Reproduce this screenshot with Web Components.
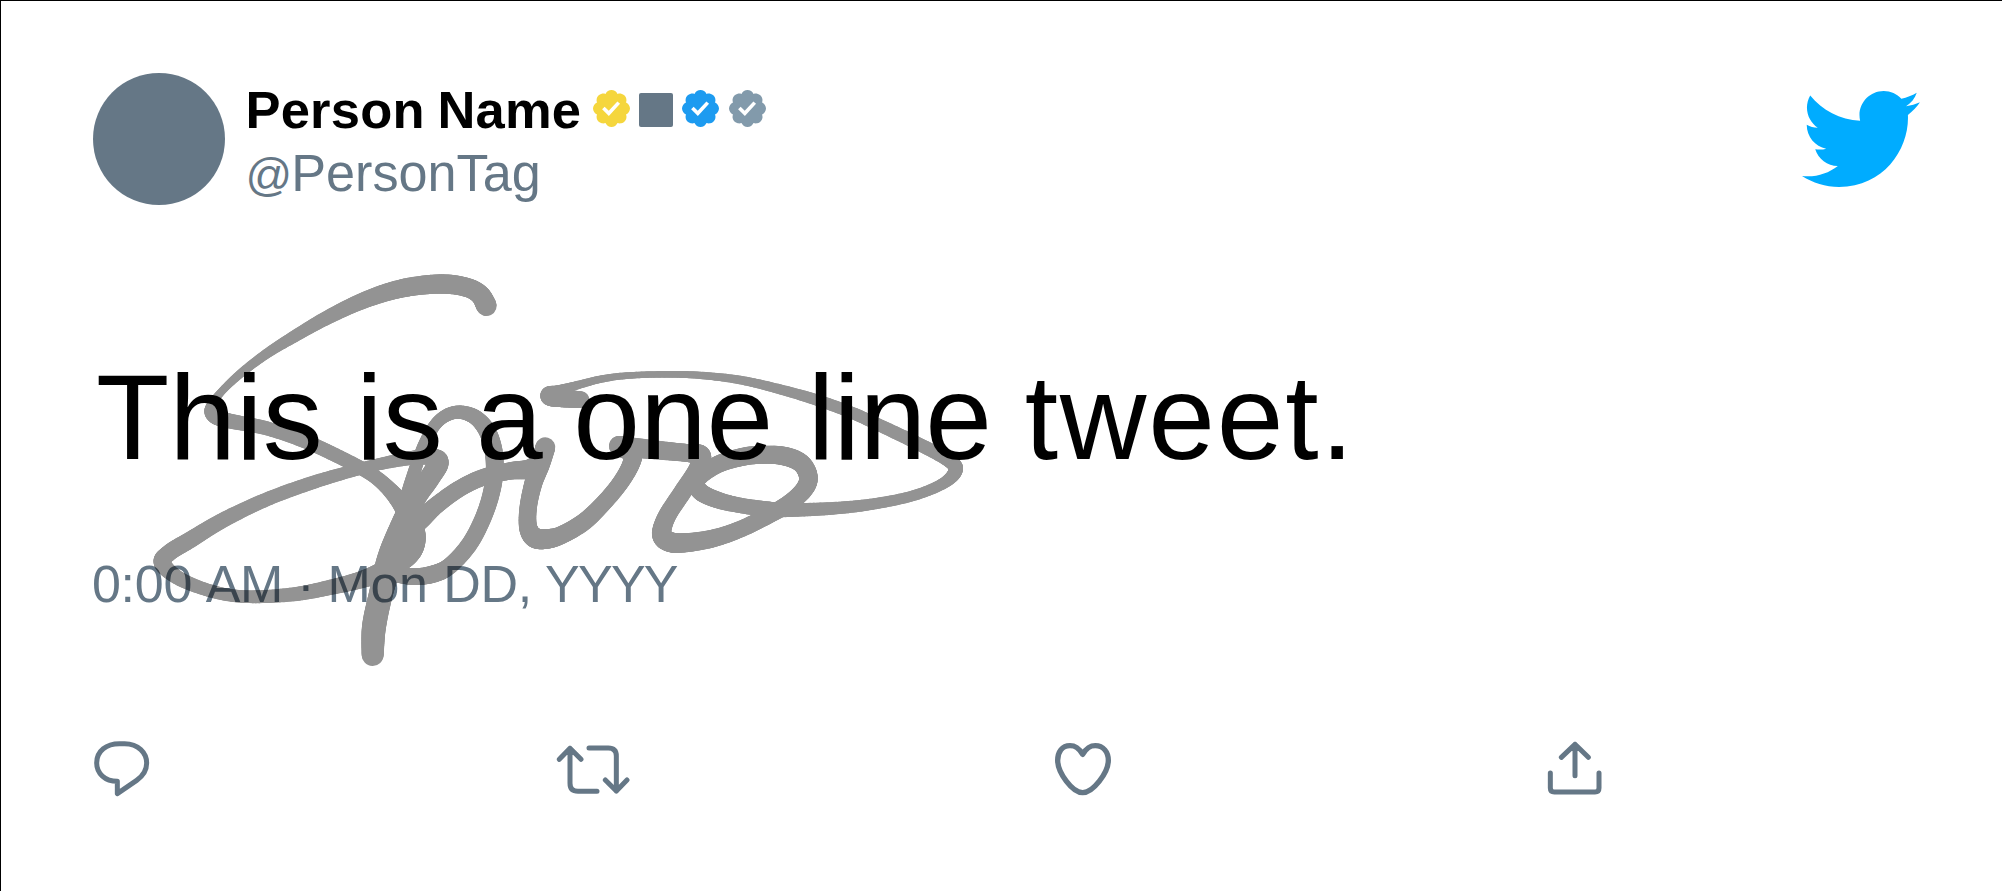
<!DOCTYPE html>
<html lang="en">
<head>
<meta charset="utf-8">
<title>Tweet</title>
<style>
html, body { margin: 0; height: 100%; background: #fff; overflow: hidden; }
body { font-family: "Liberation Sans", Arial, sans-serif; }
</style>
</head>
<body>
<tweet-card>
  <tweet-author slot="author">
    <span slot="name">Person Name</span>
    <verified-badge slot="badges" style="--tone:#f5d63d"></verified-badge>
    <affiliate-badge slot="badges"></affiliate-badge>
    <verified-badge slot="badges" style="--tone:#1d9bf0"></verified-badge>
    <verified-badge slot="badges" style="--tone:#829aab;margin-left:1px"></verified-badge>
    <span slot="tag"><span style="font-size:46px">@</span><span style="margin-left:-1px">PersonTag</span></span>
  </tweet-author>
  <bird-logo slot="logo"></bird-logo>
  <span slot="text">This is <span style="letter-spacing:-1px">a</span> <span style="margin-left:-2px">one</span> <span style="margin-left:1px;letter-spacing:-.8px">line</span> <span style="letter-spacing:1.8px">tweet.</span></span>
  <span slot="date">0:00 <span style="margin-left:-.5px">AM</span> · <span style="margin-left:-1px">Mon</span> <span style="margin-left:1.5px">DD,</span> <span style="margin-left:-1px;letter-spacing:-1.8px">YYYY</span></span>
  <tweet-actions slot="actions"></tweet-actions>
  <pen-signature slot="signature"></pen-signature>
</tweet-card>

<script>
const define = (name, html, init) => customElements.define(name, class extends HTMLElement {
  constructor() {
    super();
    this.attachShadow({ mode: "open" }).innerHTML = html;
    if (init) init(this.shadowRoot);
  }
});

define("tweet-card", `<style>
  :host { display: flex; flex-direction: column; box-sizing: border-box; width: 2002px; height: 891px;
    border-top: 1px solid #000; border-left: 1px solid #000; background: #fff; position: relative; }
  header { display: flex; justify-content: space-between; align-items: flex-start; height: 133px; padding: 72px 82px 0 92px; }
  .text { height: 140px; margin: 141px 0 0 95px; font-size: 120px; line-height: 140px; white-space: nowrap; color: #000; }
  .date { height: 60px; margin: 67px 0 0 91px; font-size: 52px; line-height: 60px; white-space: nowrap; color: #657786; letter-spacing: -.3px; }
  footer { margin: 116px 0 0 79px; }
</style>
<header><slot name="author"></slot><slot name="logo"></slot></header>
<div class="text"><slot name="text"></slot></div>
<div class="date"><slot name="date"></slot></div>
<footer><slot name="actions"></slot></footer>
<slot name="signature"></slot>`);

define("tweet-author", `<style>
  :host { display: flex; gap: 20.5px; }
  .avatar { width: 132px; height: 132px; border-radius: 50%; background: #657786; }
  .who { display: flex; flex-direction: column; padding-top: 7px; }
  .line { display: flex; align-items: center; height: 60px; }
  .name { width: 347.5px; font-weight: 700; font-size: 52.5px; letter-spacing: .2px; word-spacing: -2px; line-height: 60px; white-space: nowrap; color: #000; }
  .badges { display: flex; gap: 9px; margin-top: -3px; }
  .tag { height: 60px; margin-top: 3px; font-size: 52.2px; line-height: 60px; color: #657786; white-space: nowrap; }
</style>
<div class="avatar"></div>
<div class="who">
  <div class="line"><div class="name"><slot name="name"></slot></div><div class="badges"><slot name="badges"></slot></div></div>
  <div class="tag"><slot name="tag"></slot></div>
</div>`);

define("verified-badge", `<style>:host { display: block; width: 37px; height: 37px; } svg { display: block; fill: var(--tone); }</style>
<svg width="37" height="37" viewBox="1.604 1.604 18.792 18.792"><path d="M20.396 11c-.018-.646-.215-1.275-.57-1.816-.354-.54-.852-.972-1.438-1.246.223-.607.27-1.264.14-1.897-.131-.634-.437-1.218-.882-1.687-.47-.445-1.053-.75-1.687-.882-.633-.13-1.29-.083-1.897.14-.273-.587-.704-1.086-1.245-1.44S11.647 1.62 11 1.604c-.646.017-1.273.213-1.813.568s-.969.854-1.24 1.44c-.608-.223-1.267-.272-1.902-.14-.635.13-1.22.436-1.69.882-.445.47-.749 1.055-.878 1.688-.13.633-.08 1.29.144 1.896-.587.274-1.087.705-1.443 1.245-.356.54-.555 1.17-.574 1.817.02.647.218 1.276.574 1.817.356.54.856.972 1.443 1.245-.224.606-.274 1.263-.144 1.896.13.634.433 1.218.877 1.688.47.443 1.054.747 1.687.878.633.132 1.29.084 1.897-.136.274.586.705 1.084 1.246 1.439.54.354 1.17.551 1.816.569.647-.016 1.276-.213 1.817-.567s.972-.854 1.245-1.44c.604.239 1.266.296 1.903.164.636-.132 1.22-.447 1.68-.907.46-.46.776-1.044.908-1.681s.075-1.299-.165-1.903c.586-.274 1.084-.705 1.439-1.246.354-.54.551-1.17.569-1.816zM9.662 14.85l-3.429-3.428 1.293-1.302 2.072 2.072 4.4-4.794 1.347 1.246z"/></svg>`);

define("affiliate-badge", `<style>:host { display: block; width: 34px; height: 34px; margin-top: 3px; border-radius: 2px; background: #657786; }</style>`);

define("bird-logo", `<style>:host { display: block; margin-top: 17.5px; } svg { display: block; overflow: visible; }</style>
<svg width="118" height="96.5" viewBox="0.937 2.752 22.706 18.57" preserveAspectRatio="none"><path fill="#00acff" d="M23.643 4.937c-.835.37-1.732.62-2.675.733.962-.576 1.7-1.49 2.048-2.578-.9.534-1.897.922-2.958 1.13-.85-.904-2.06-1.47-3.4-1.47-2.572 0-4.658 2.086-4.658 4.66 0 .364.042.718.12 1.06-3.873-.195-7.304-2.05-9.602-4.868-.4.69-.63 1.49-.63 2.342 0 1.616.823 3.043 2.072 3.878-.764-.025-1.482-.234-2.11-.583v.06c0 2.257 1.605 4.14 3.737 4.568-.392.106-.803.162-1.227.162-.3 0-.593-.028-.877-.082.593 1.85 2.313 3.198 4.352 3.234-1.595 1.25-3.604 1.995-5.786 1.995-.376 0-.747-.022-1.112-.065 2.062 1.323 4.51 2.093 7.14 2.093 8.57 0 13.255-7.098 13.255-13.254 0-.2-.005-.402-.014-.602.91-.658 1.7-1.477 2.323-2.41z"/></svg>`);

define("tweet-actions", `<style>
  :host { display: grid; grid-template-columns: 460px 500px 490px 90px; }
  svg { display: block; fill: none; stroke: #657786; stroke-width: 15; stroke-linecap: round; stroke-linejoin: round; }
</style>
<svg width="90" height="80" viewBox="0 0 270 240"><path d="M112 191V154C75 154 50 130 50 99C50 62 80 41 118 41H134C175 41 200 69 200 99C200 122 190 137 170 151Z"/></svg>
<svg width="110" height="80" viewBox="0 0 330 240"><path d="M58 88L90 55L123 88M90 55V160Q90 184 114 184H171M147 54H205Q229 54 229 78V183M196 150L229 183L261 150"/></svg>
<svg width="90" height="80" viewBox="0 0 270 240" style="stroke-width:16"><path d="M128 73C116 53 106 47 90 47C66 47 53 66 53 91C53 128 97 188 128 188C159 188 205 128 205 91C205 66 190 47 166 47C150 47 140 53 128 73Z"/></svg>
<svg width="90" height="80" viewBox="0 0 270 240"><path d="M94 82L135 43L175 82M135 43V137M61 129V174Q61 186 73 186H195Q207 186 207 174V129"/></svg>`);

/* Signature: each stroke is a list of [x, y, pen width] samples joined by a smooth curve. */
const ink = [
  [[1219,137,62],[1200,104,59],[1160,82,57],[1090,72,58],[1000,79,56],[920,97,53],[830,130,48],[730,179,42],[640,231,36],[560,281,30],[480,342,26],[420,400,23],[394,440,32],[402,464,48],[440,481,45],[560,505,42],[680,546,42],[780,592,42],[870,640,42],[925,685,46],[970,740,56],[998,800,66],[1001,850,68],[975,890,68],[915,930,60],[850,957,52],[760,980,46],[640,1003,42],[500,1010,38],[400,995,38],[300,957,42],[247,910,50],[268,878,50],[330,840,50],[430,780,46],[560,718,42],[700,667,40],[820,632,36],[900,612,36],[1000,593,42],[1055,592,50],[1075,608,62],[1048,655,62],[1000,725,64],[965,810,78],[930,900,80],[903,1000,72],[882,1100,72],[878,1185,66]],
  [[960,800,50],[985,700,44],[1008,620,38],[1035,550,38],[1065,495,36],[1103,464,38],[1145,457,40],[1190,475,46],[1225,520,52],[1243,590,54],[1240,670,52],[1215,760,50],[1170,850,50],[1110,917,50],[1060,942,52],[1000,950,50],[940,940,50]],
  [[990,810,50],[1022,780,56],[1070,735,52],[1140,685,50],[1210,652,50],[1290,633,52],[1350,627,58],[1380,605,58]],
  [[1396,562,60],[1380,615,58],[1360,670,54],[1345,740,52],[1344,800,54],[1362,832,60],[1395,837,60],[1440,827,54],[1510,787,53],[1570,730,50],[1620,670,50],[1652,615,52],[1656,580,56],[1617,558,60]],
  [[1617,558,60],[1660,563,60],[1760,573,55],[1830,580,54],[1863,588,60],[1852,628,54],[1805,700,54],[1760,770,54],[1745,823,58],[1770,846,60],[1820,848,57],[1900,835,53],[1980,808,50],[2060,769,50],[2130,728,52],[2174,686,54],[2185,650,56],[2165,611,56],[2120,590,56],[2060,584,54],[1990,590,54],[1910,615,52],[1851,660,50],[1860,694,52],[1910,719,50],[1980,736,46],[2060,747,46],[2130,750,42],[2260,745,38],[2380,732,34],[2500,707,32],[2590,670,34],[2627,631,42],[2608,602,42],[2530,559,40],[2410,501,38],[2310,456,36],[2210,420,34],[2100,388,30],[1980,360,26],[1860,346,22],[1750,343,20],[1640,347,20],[1560,358,22],[1480,379,26],[1430,394,34],[1409,408,56],[1450,415,54],[1503,419,50]]
];
define("pen-signature", `<style>
  :host { display: block; position: absolute; left: 79px; top: 259px; pointer-events: none; }
  svg { display: block; }
</style>
<svg width="900" height="420" viewBox="0 0 2700 1260"><g opacity=".42" stroke="#000" stroke-linecap="round"></g></svg>`, root => {
  const curve = (a, b, c, d, t) => 0.5 * (2 * b + (c - a) * t + (2 * a - 5 * b + 4 * c - d) * t * t + (3 * b - a - 3 * c + d) * t * t * t);
  let out = "";
  for (const s of ink) {
    for (let i = 0; i < s.length - 1; i++) {
      const p = [s[Math.max(0, i - 1)], s[i], s[i + 1], s[Math.min(s.length - 1, i + 2)]];
      let prev = s[i];
      for (let k = 1; k <= 14; k++) {
        const q = [0, 1, 2].map(j => curve(p[0][j], p[1][j], p[2][j], p[3][j], k / 14));
        out += `<line x1="${prev[0].toFixed(1)}" y1="${prev[1].toFixed(1)}" x2="${q[0].toFixed(1)}" y2="${q[1].toFixed(1)}" stroke-width="${q[2].toFixed(1)}"/>`;
        prev = q;
      }
    }
  }
  root.querySelector("g").innerHTML = out;
});
</script>
</body>
</html>
